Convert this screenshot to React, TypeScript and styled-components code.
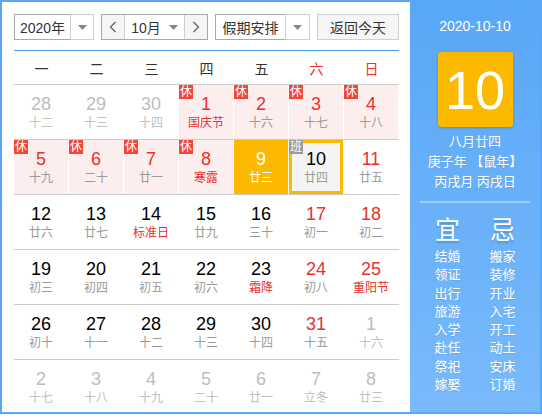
import React from 'react';
import styled, { createGlobalStyle } from 'styled-components';

const GlobalStyle = createGlobalStyle`
  html, body {
    margin: 0;
    padding: 0;
    background: #fff;
  }
  body {
    font-family: "Liberation Sans", "Noto Sans CJK SC", sans-serif;
  }
`;

type Day = {
  d: number;
  lunar: string;
  other?: boolean;
  red?: boolean;
  fest?: boolean;
  badge?: '休' | '班';
  selected?: boolean;
  today?: boolean;
};

const WEEK = ['一', '二', '三', '四', '五', '六', '日'];

const ROWS: Day[][] = [
  [
    { d: 28, lunar: '十二', other: true },
    { d: 29, lunar: '十三', other: true },
    { d: 30, lunar: '十四', other: true },
    { d: 1, lunar: '国庆节', red: true, fest: true, badge: '休' },
    { d: 2, lunar: '十六', red: true, badge: '休' },
    { d: 3, lunar: '十七', red: true, badge: '休' },
    { d: 4, lunar: '十八', red: true, badge: '休' },
  ],
  [
    { d: 5, lunar: '十九', red: true, badge: '休' },
    { d: 6, lunar: '二十', red: true, badge: '休' },
    { d: 7, lunar: '廿一', red: true, badge: '休' },
    { d: 8, lunar: '寒露', red: true, fest: true, badge: '休' },
    { d: 9, lunar: '廿三', selected: true },
    { d: 10, lunar: '廿四', today: true, badge: '班' },
    { d: 11, lunar: '廿五', red: true },
  ],
  [
    { d: 12, lunar: '廿六' },
    { d: 13, lunar: '廿七' },
    { d: 14, lunar: '标准日', fest: true },
    { d: 15, lunar: '廿九' },
    { d: 16, lunar: '三十' },
    { d: 17, lunar: '初一', red: true },
    { d: 18, lunar: '初二', red: true },
  ],
  [
    { d: 19, lunar: '初三' },
    { d: 20, lunar: '初四' },
    { d: 21, lunar: '初五' },
    { d: 22, lunar: '初六' },
    { d: 23, lunar: '霜降', fest: true },
    { d: 24, lunar: '初八', red: true },
    { d: 25, lunar: '重阳节', red: true, fest: true },
  ],
  [
    { d: 26, lunar: '初十' },
    { d: 27, lunar: '十一' },
    { d: 28, lunar: '十二' },
    { d: 29, lunar: '十三' },
    { d: 30, lunar: '十四' },
    { d: 31, lunar: '十五', red: true },
    { d: 1, lunar: '十六', other: true },
  ],
  [
    { d: 2, lunar: '十七', other: true },
    { d: 3, lunar: '十八', other: true },
    { d: 4, lunar: '十九', other: true },
    { d: 5, lunar: '二十', other: true },
    { d: 6, lunar: '廿一', other: true },
    { d: 7, lunar: '立冬', other: true },
    { d: 8, lunar: '廿三', other: true },
  ],
];

const YI = ['结婚', '领证', '出行', '旅游', '入学', '赴任', '祭祀', '嫁娶'];
const JI = ['搬家', '装修', '开业', '入宅', '开工', '动土', '安床', '订婚'];

const Caret = () => (
  <svg width="9" height="5" viewBox="0 0 9 5">
    <polygon points="0,0 9,0 4.5,5" fill="#858585" />
  </svg>
);

const Chevron = ({ dir }: { dir: 'left' | 'right' }) => (
  <svg width="8" height="12" viewBox="0 0 8 12">
    <polyline
      points={dir === 'left' ? '6.5,1 1.5,6 6.5,11' : '1.5,1 6.5,6 1.5,11'}
      fill="none"
      stroke="#666"
      strokeWidth="1.3"
    />
  </svg>
);

export default function App() {
  return (
    <>
      <GlobalStyle />
      <Widget>
        <Main>
          <Toolbar>
            <Select>
              <SelectText $w={56}>2020年</SelectText>
              <SelectArrow $w={24}>
                <Caret />
              </SelectArrow>
            </Select>
            <MonthGroup>
              <NavButton>
                <Chevron dir="left" />
              </NavButton>
              <MonthPick>
                <span>10月</span>
                <Caret />
              </MonthPick>
              <NavButton>
                <Chevron dir="right" />
              </NavButton>
            </MonthGroup>
            <Select>
              <SelectText $w={70}>假期安排</SelectText>
              <SelectArrow $w={25}>
                <Caret />
              </SelectArrow>
            </Select>
            <TodayButton>返回今天</TodayButton>
          </Toolbar>
          <BlueLine />
          <WeekHeader>
            {WEEK.map((w, i) => (
              <WeekDay key={w} $red={i >= 5}>
                {w}
              </WeekDay>
            ))}
          </WeekHeader>
          {ROWS.map((row, ri) => (
            <Row key={ri}>
              {row.map((day, ci) => (
                <Cell
                  key={ci}
                  $holiday={day.badge === '休'}
                  $selected={!!day.selected}
                  $today={!!day.today}
                >
                  {day.badge && <Badge $work={day.badge === '班'}>{day.badge}</Badge>}
                  <DayNum
                    $tone={
                      day.selected ? 'white' : day.other ? 'gray' : day.red ? 'red' : 'black'
                    }
                  >
                    {day.d}
                  </DayNum>
                  <Lunar
                    $tone={
                      day.selected ? 'white' : day.other ? 'gray' : day.fest ? 'red' : 'normal'
                    }
                  >
                    {day.lunar}
                  </Lunar>
                </Cell>
              ))}
            </Row>
          ))}
        </Main>
        <Side>
          <DateLine>2020-10-10</DateLine>
          <BigDay>10</BigDay>
          <LunarInfo>
            <div>八月廿四</div>
            <div>庚子年 【鼠年】</div>
            <div>丙戌月 丙戌日</div>
          </LunarInfo>
          <SideRule />
          <Advice>
            <AdviceCol>
              <AdviceHead>宜</AdviceHead>
              {YI.map((t) => (
                <AdviceItem key={t}>{t}</AdviceItem>
              ))}
            </AdviceCol>
            <AdviceCol>
              <AdviceHead>忌</AdviceHead>
              {JI.map((t) => (
                <AdviceItem key={t}>{t}</AdviceItem>
              ))}
            </AdviceCol>
          </Advice>
        </Side>
      </Widget>
    </>
  );
}

const Widget = styled.div`
  display: flex;
  width: 542px;
  height: 414px;
  box-sizing: border-box;
  border: 2px solid #5aa7f7;
  overflow: hidden;
  background: #fff;
`;

const Main = styled.div`
  width: 408px;
  flex: none;
  box-sizing: border-box;
  padding: 12px 11px 0 12px;
`;

const Toolbar = styled.div`
  display: flex;
  gap: 7px;
  height: 26px;
  font-size: 14px;
  color: #333;
`;

const Select = styled.div`
  display: flex;
  height: 100%;
`;

const SelectText = styled.div<{ $w: number }>`
  width: ${(p) => p.$w}px;
  box-sizing: border-box;
  border: 1px solid #a8a8a8;
  border-right: none;
  display: flex;
  align-items: center;
  justify-content: center;
  background: #fff;
`;

const SelectArrow = styled.div<{ $w: number }>`
  width: ${(p) => p.$w}px;
  box-sizing: border-box;
  border: 1px solid #cfcfcf;
  display: flex;
  align-items: center;
  justify-content: center;
  background: #fff;
`;

const MonthGroup = styled.div`
  display: flex;
  width: 107px;
  box-sizing: border-box;
  border: 1px solid #a8a8a8;
`;

const NavButton = styled.div`
  width: 22px;
  flex: none;
  display: flex;
  align-items: center;
  justify-content: center;
  background: #f5f5f5;
`;

const MonthPick = styled.div`
  flex: 1;
  display: flex;
  align-items: center;
  justify-content: center;
  gap: 8px;
  border-left: 1px solid #cfcfcf;
  border-right: 1px solid #cfcfcf;
  background: #fff;
`;

const TodayButton = styled.div`
  width: 82px;
  box-sizing: border-box;
  border: 1px solid #cfcfcf;
  background: #f6f6f6;
  display: flex;
  align-items: center;
  justify-content: center;
`;

const BlueLine = styled.div`
  height: 1px;
  margin-top: 10px;
  background: #4d9ef0;
`;

const WeekHeader = styled.div`
  display: grid;
  grid-template-columns: repeat(7, 55px);
  height: 33px;
  align-items: center;
`;

const WeekDay = styled.div<{ $red: boolean }>`
  text-align: center;
  font-size: 14px;
  color: ${(p) => (p.$red ? '#e8312d' : '#333')};
`;

const Row = styled.div`
  display: grid;
  grid-template-columns: repeat(7, 55px);
  height: 55px;
  box-sizing: border-box;
  border-top: 1px solid #cacaca;
`;

const Cell = styled.div<{ $holiday: boolean; $selected: boolean; $today: boolean }>`
  position: relative;
  box-sizing: border-box;
  border-right: 1px solid #fff;
  padding-top: 8px;
  text-align: center;
  background: ${(p) =>
    p.$selected ? '#fbb900' : p.$today ? '#f4f4f4' : p.$holiday ? '#fdeeee' : '#fff'};
  box-shadow: ${(p) => (p.$today ? 'inset 0 0 0 3px #fbb900' : 'none')};
`;

const Badge = styled.span<{ $work: boolean }>`
  position: absolute;
  top: 0;
  left: 0;
  width: 14px;
  height: 14px;
  line-height: 14px;
  font-size: 12px;
  color: #fff;
  text-align: center;
  background: ${(p) => (p.$work ? '#9b9b9b' : '#f2463a')};
`;

const NUM_COLORS = { white: '#fff', gray: '#bdbdbd', red: '#e8312d', black: '#000' };
const LUNAR_COLORS = { white: '#fff', gray: '#c0c0c0', red: '#e8312d', normal: '#9a9a9a' };

const DayNum = styled.div<{ $tone: keyof typeof NUM_COLORS }>`
  font-size: 18px;
  line-height: 22px;
  color: ${(p) => NUM_COLORS[p.$tone]};
`;

const Lunar = styled.div<{ $tone: keyof typeof LUNAR_COLORS }>`
  font-size: 12px;
  line-height: 16px;
  color: ${(p) => LUNAR_COLORS[p.$tone]};
`;

const Side = styled.div`
  flex: 1;
  display: flex;
  flex-direction: column;
  align-items: center;
  padding-top: 14px;
  color: #fff;
  background: linear-gradient(#59a7f7, #79bafb);
`;

const DateLine = styled.div`
  font-size: 14px;
  line-height: 20px;
`;

const BigDay = styled.div`
  margin-top: 16px;
  width: 75px;
  height: 75px;
  border-radius: 3px;
  background: #fbb900;
  box-shadow: 0 1px 3px rgba(0, 0, 0, 0.2);
  display: flex;
  align-items: center;
  justify-content: center;
  font-size: 54px;
  line-height: 1;
`;

const LunarInfo = styled.div`
  margin-top: 5px;
  font-size: 13px;
  line-height: 20px;
  text-align: center;
  text-shadow: 0 1px 1px rgba(0, 0, 0, 0.08);
`;

const SideRule = styled.div`
  margin-top: 9px;
  width: 110px;
  height: 2px;
  background: rgba(255, 255, 255, 0.35);
`;

const Advice = styled.div`
  display: grid;
  grid-template-columns: 55px 55px;
  margin-top: 12px;
`;

const AdviceCol = styled.div`
  display: flex;
  flex-direction: column;
  align-items: center;
`;

const AdviceHead = styled.div`
  font-size: 25px;
  line-height: 30px;
  margin-bottom: 3px;
  text-shadow: 0 2px 2px rgba(0, 0, 0, 0.18);
`;

const AdviceItem = styled.div`
  font-size: 13px;
  line-height: 18.3px;
  text-shadow: 0 1px 1px rgba(0, 0, 0, 0.08);
`;
